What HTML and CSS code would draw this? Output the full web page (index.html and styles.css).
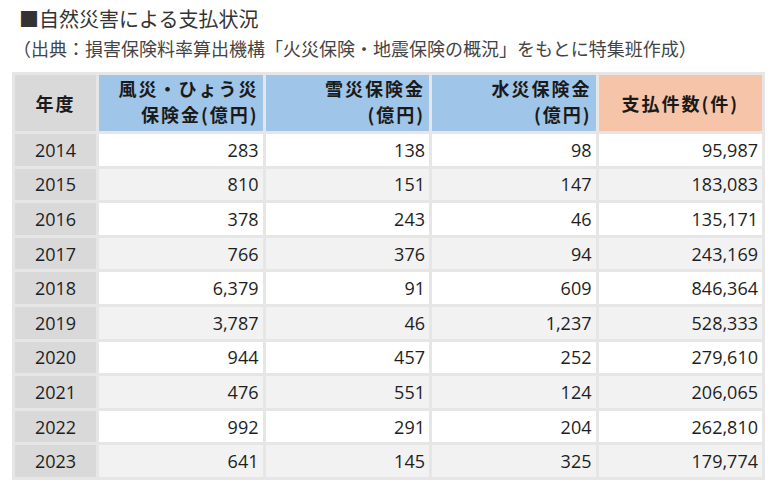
FILE: index.html
```html
<!DOCTYPE html>
<html lang="ja">
<head>
<meta charset="utf-8">
<link rel="stylesheet" href="styles.css">
</head>
<body>
<div class="page">
  <h1 class="title">■自然災害による支払状況</h1>
  <p class="source">（出典：損害保険料率算出機構「火災保険・地震保険の概況」をもとに特集班作成）</p>
  <table class="tbl">
    <colgroup>
      <col class="c-year">
      <col class="c-num">
      <col class="c-num">
      <col class="c-num">
      <col class="c-num">
    </colgroup>
    <thead>
      <tr>
        <th class="h-year">年度</th>
        <th class="h-blue two">風災・ひょう災<br>保険金(億円)</th>
        <th class="h-blue two">雪災保険金<br>(億円)</th>
        <th class="h-blue two">水災保険金<br>(億円)</th>
        <th class="h-orange">支払件数(件)</th>
      </tr>
    </thead>
    <tbody>
      <tr><td class="yr">2014</td><td>283</td><td>138</td><td>98</td><td>95,987</td></tr>
      <tr><td class="yr">2015</td><td>810</td><td>151</td><td>147</td><td>183,083</td></tr>
      <tr><td class="yr">2016</td><td>378</td><td>243</td><td>46</td><td>135,171</td></tr>
      <tr><td class="yr">2017</td><td>766</td><td>376</td><td>94</td><td>243,169</td></tr>
      <tr><td class="yr">2018</td><td>6,379</td><td>91</td><td>609</td><td>846,364</td></tr>
      <tr><td class="yr">2019</td><td>3,787</td><td>46</td><td>1,237</td><td>528,333</td></tr>
      <tr><td class="yr">2020</td><td>944</td><td>457</td><td>252</td><td>279,610</td></tr>
      <tr><td class="yr">2021</td><td>476</td><td>551</td><td>124</td><td>206,065</td></tr>
      <tr><td class="yr">2022</td><td>992</td><td>291</td><td>204</td><td>262,810</td></tr>
      <tr><td class="yr">2023</td><td>641</td><td>145</td><td>325</td><td>179,774</td></tr>
    </tbody>
  </table>
</div>
</body>
</html>
```
FILE: styles.css
```css
html, body {
  margin: 0;
  padding: 0;
  background: #ffffff;
}

.page {
  padding: 6px 0 0 0;
  font-family: "Open Sans", "Noto Sans CJK JP", sans-serif;
  color: #222;
}

.title {
  margin: 0;
  padding-left: 19px;
  font-family: "Noto Sans CJK JP", sans-serif;
  font-weight: 400;
  font-size: 20px;
  line-height: 26px;
  color: #333;
}

.source {
  margin: 3px 0 0 0;
  padding-left: 13px;
  font-family: "Noto Sans CJK JP", sans-serif;
  font-size: 18px;
  line-height: 26px;
  color: #444;
}

.tbl {
  margin: 11px 0 0 12px;
  width: 753px;
  table-layout: fixed;
  border-collapse: separate;
  border-spacing: 3px;
  background: #e6e6e6;
}

.c-year { width: 81px; }
.c-num { width: 163.5px; }

.tbl th {
  height: 56px;
  padding: 0 4px;
  font-family: "Noto Sans CJK JP", sans-serif;
  font-weight: 700;
  font-size: 18px;
  line-height: 26px;
  letter-spacing: 2px;
  color: #1a1a1a;
  vertical-align: middle;
}

.tbl th.two {
  height: 52px;
  text-align: right;
  vertical-align: top;
  padding: 0 4px 4px 4px;
}

.h-year {
  background: #d9d9d9;
  text-align: center;
}

.h-blue {
  background: #9fc5e8;
}

.h-orange {
  background: #f6c4a8;
  text-align: center;
}

.tbl td {
  height: 31.6px;
  padding: 0 4px 0 4px;
  font-size: 18px;
  line-height: 24px;
  text-align: right;
  vertical-align: middle;
  background: #ffffff;
  color: #1e1e1e;
}

.tbl tbody tr:nth-child(even) td {
  background: #f2f2f2;
}

.tbl td.yr,
.tbl tbody tr:nth-child(even) td.yr {
  background: #d9d9d9;
  text-align: center;
}
```
